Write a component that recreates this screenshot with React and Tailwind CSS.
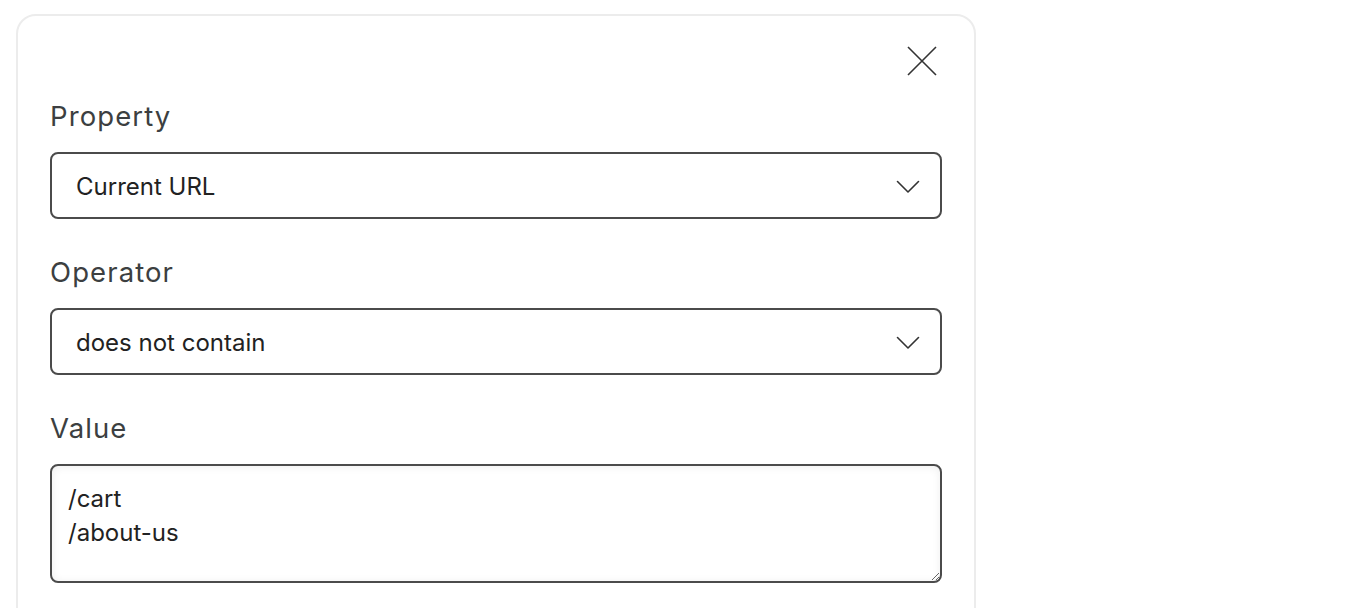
function Chevron() {
  return (
    <svg width="24" height="14" viewBox="0 0 24 14" fill="none" className="shrink-0">
      <path d="M1.5 1.5L12 12L22.5 1.5" stroke="#333" strokeWidth="1.6" strokeLinecap="round" strokeLinejoin="round" />
    </svg>
  );
}

function SelectBox({ value }) {
  return (
    <div className="h-[67px] border-2 border-[#4b4b4b] rounded-[8px] flex items-center justify-between pl-[24px] pr-[20px] pt-[2px] bg-white">
      <span className="text-[24px] text-[#222]">{value}</span>
      <Chevron />
    </div>
  );
}

function Label({ children }) {
  return <div className="text-[27.5px] leading-[36px] tracking-[0.04em] text-[#3c3f41] mb-[18px]">{children}</div>;
}

export default function App() {
  return (
    <div className="h-screen overflow-hidden bg-white pl-[16px] pt-[14px] font-['Inter',sans-serif]">
      <div className="w-[960px] h-[640px] border-2 border-[#ececec] rounded-[20px] px-[32px] pt-[30px]">
        <div className="flex justify-end pr-[5px]">
          <button className="w-[30px] h-[30px] flex items-center justify-center">
            <svg width="30" height="30" viewBox="0 0 30 30" fill="none">
              <path d="M1 1L29 29M29 1L1 29" stroke="#333" strokeWidth="1.6" />
            </svg>
          </button>
        </div>
        <div className="mt-[22px]">
          <Label>Property</Label>
          <SelectBox value="Current URL" />
        </div>
        <div className="mt-[35px]">
          <Label>Operator</Label>
          <SelectBox value="does not contain" />
        </div>
        <div className="mt-[35px]">
          <Label>Value</Label>
          <textarea
            defaultValue={"/cart\n/about-us"}
            className="block w-full h-[119px] border-2 border-[#4b4b4b] rounded-[8px] px-[16px] pt-[16px] text-[24px] leading-[34px] text-[#222] bg-white shadow-[inset_0_1px_8px_rgba(0,0,0,0.07)] outline-none"
          />
        </div>
      </div>
    </div>
  );
}
